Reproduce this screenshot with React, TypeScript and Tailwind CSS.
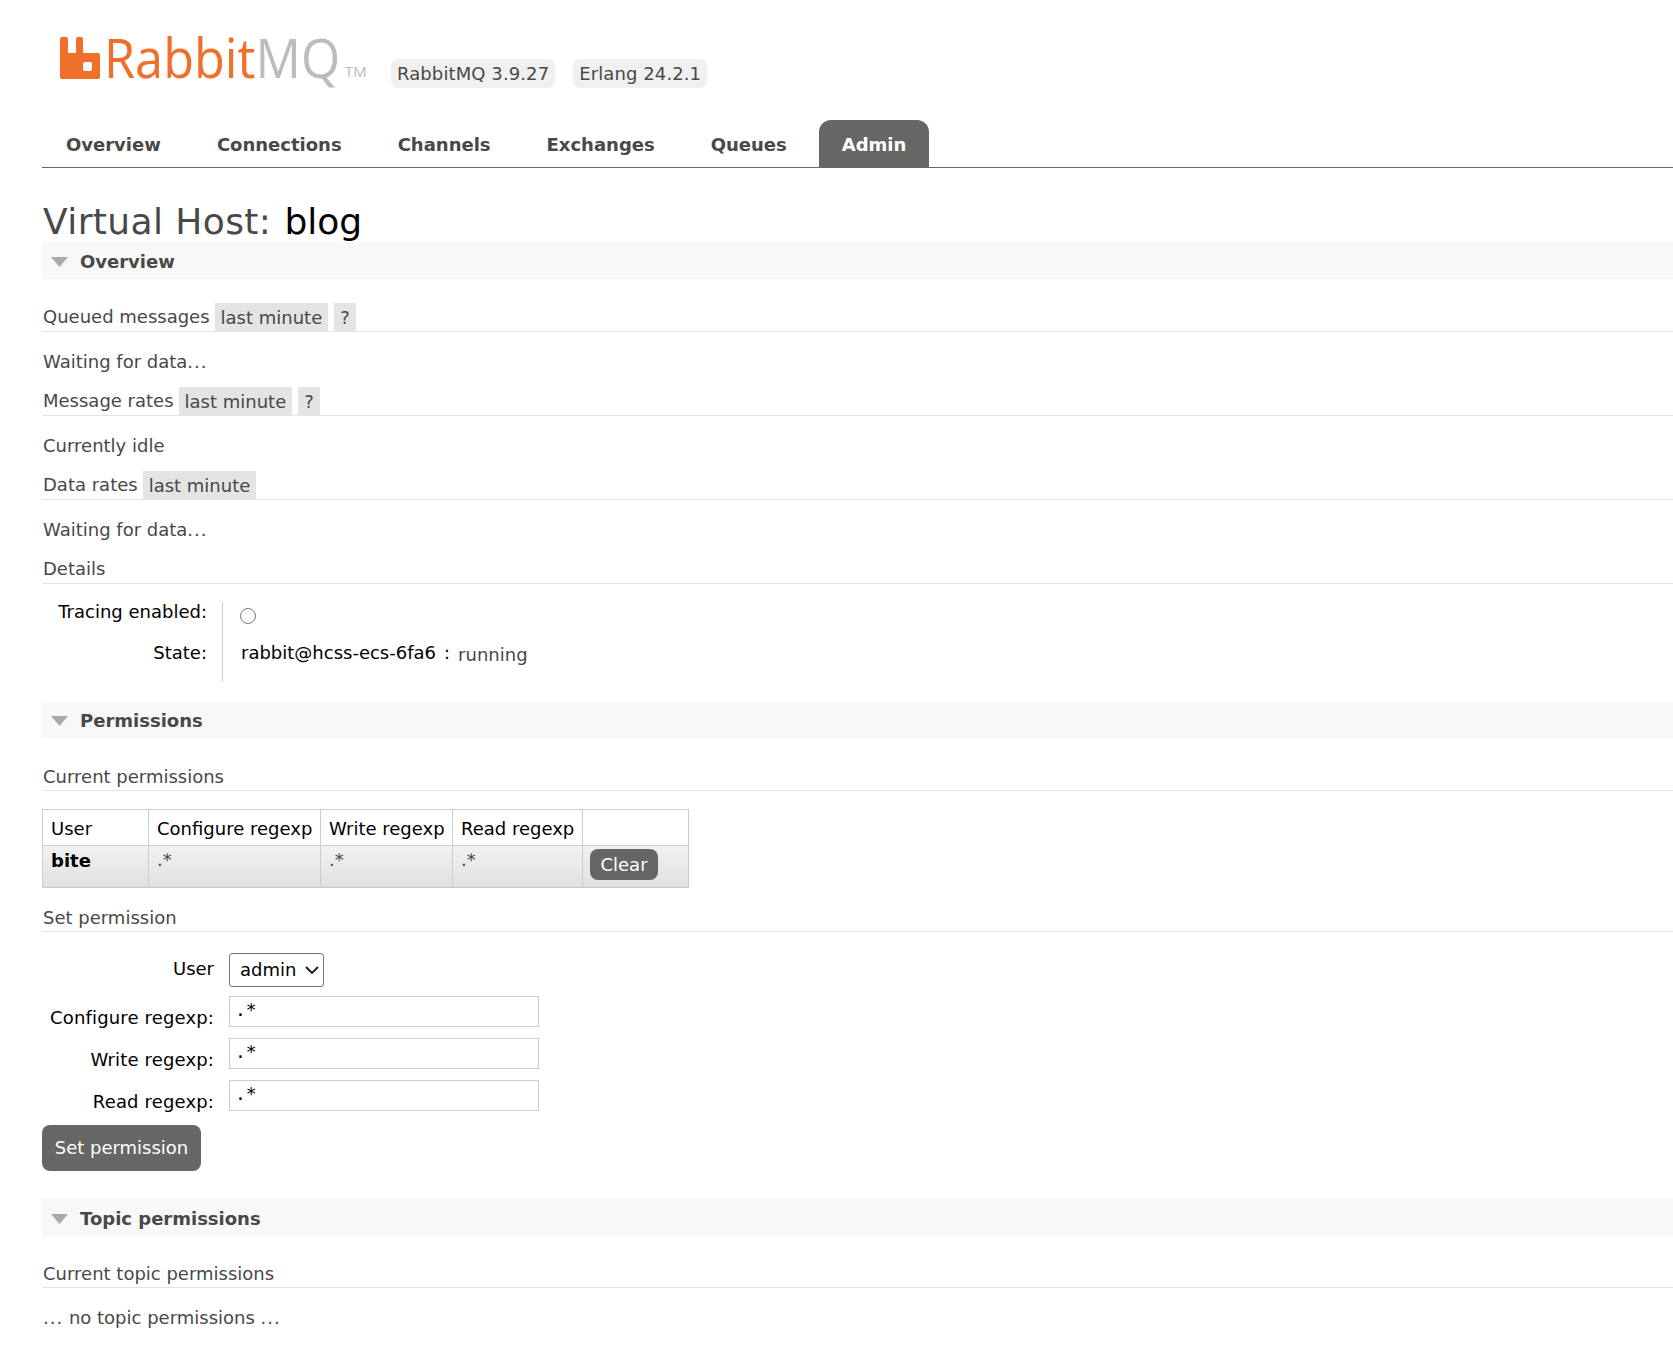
import type { ReactNode } from 'react';

function Logo() {
  return (
    <svg width="320" height="50" viewBox="0 0 320 50" className="block overflow-visible" aria-label="RabbitMQ">
      {/* rabbit mark */}
      <path
        fill="#f0702b"
        fillRule="evenodd"
        d="M2 0h4a2 2 0 0 1 2 2v14h8V2a2 2 0 0 1 2-2h3a2 2 0 0 1 2 2v14h15a2 2 0 0 1 2 2v22a2 2 0 0 1-2 2H2a2 2 0 0 1-2-2V2a2 2 0 0 1 2-2zM25 25a2 2 0 0 0-2 2v5a2 2 0 0 0 2 2h5a2 2 0 0 0 2-2v-5a2 2 0 0 0-2-2z"
      />
      <text
        transform="translate(44 41) scale(0.917 1)"
        fill="#f0702b"
        fontFamily="'Open Sans', sans-serif"
        fontSize="55"
      >
        Rabbit<tspan fill="#bcbcbc">MQ</tspan>
      </text>
      <text x="285" y="40" fill="#bcbcbc" fontFamily="'Open Sans', sans-serif" fontSize="15">
        TM
      </text>
    </svg>
  );
}

function Pill({ children }: { children: ReactNode }) {
  return <span className="h-[28px] bg-[#e4e4e4] px-[6px] pt-px leading-[28px]">{children}</span>;
}

function SectionBar({ title }: { title: string }) {
  return (
    <div className="flex h-[37px] items-center bg-[#f8f8f8] pt-[2px]">
      <svg width="17" height="10" viewBox="0 0 17 10" className="ml-[9px] mr-[12px]">
        <path d="M0 0h17L8.500 10z" fill="#aaaaaa" />
      </svg>
      <h2 className="font-bold text-[#484848]">{title}</h2>
    </div>
  );
}

function SubHead({ children, top = 0 }: { children: ReactNode; top?: number }) {
  return (
    <h3
      className="flex h-[29px] items-end gap-[6px] border-b border-[#e4e4e4] pl-px leading-[28px] text-[#484848]"
      style={top ? { marginTop: top } : undefined}
    >
      {children}
    </h3>
  );
}

function Status({ children }: { children: ReactNode }) {
  return <p className="flex h-[55px] items-center pl-px pt-[4px] text-[#484848]">{children}</p>;
}

function Chart({ title, help, top }: { title: string; help?: boolean; top?: number }) {
  return (
    <SubHead top={top}>
      <span className="-mr-px">{title}</span>
      <Pill>last minute</Pill>
      {help && <Pill>?</Pill>}
    </SubHead>
  );
}

function RegexpField({ label }: { label: string }) {
  return (
    <div className="mt-[11px] flex h-[31px] items-center">
      <label className="w-[172px] pt-[12px] text-right tracking-[0.15px] text-black">{label}</label>
      <input
        type="text"
        defaultValue=".*"
        className="ml-[15px] h-[31px] w-[310px] border border-[#cccccc] px-[5px] pb-[5px] font-['DejaVu_Sans_Mono',monospace] text-[18px] text-black outline-none"
      />
    </div>
  );
}

const NAV = ['Overview', 'Connections', 'Channels', 'Exchanges', 'Queues'];

const COLUMNS = [
  { label: 'User', cls: 'w-[106px]' },
  { label: 'Configure regexp', cls: 'w-[172px]' },
  { label: 'Write regexp', cls: 'w-[132px]' },
  { label: 'Read regexp', cls: 'w-[130px]' },
  { label: '', cls: 'w-[106px]' },
];

export default function App() {
  return (
    <div className="h-[1350px] overflow-hidden bg-white font-['DejaVu_Sans',sans-serif] text-[18px] leading-[24px] text-[#484848]">
      {/* header */}
      <header className="flex h-[120px] pl-[60px] pt-[37px]">
        <Logo />
        <div className="ml-[11px] mt-[22px] flex h-[29px] gap-[18px] tracking-[0.1px]">
          <span className="rounded-[7px] bg-[#f0f0f0] px-[6px] leading-[30px]">RabbitMQ 3.9.27</span>
          <span className="rounded-[7px] bg-[#f0f0f0] px-[6px] leading-[30px]">Erlang 24.2.1</span>
        </div>
      </header>

      <div className="pl-[42px]">
        <nav className="flex h-[48px] items-stretch gap-[8px] border-b border-[#666666] font-bold">
          {NAV.map((item) => (
            <a key={item} className="flex items-center px-[24px] pt-[3px] text-[#484848]">
              {item}
            </a>
          ))}
          <a className="flex items-center rounded-t-[12px] bg-[#666666] px-[23px] pt-[3px] text-white">Admin</a>
        </nav>

        <h1 className="flex h-[74px] items-end pl-px text-[36px] leading-[41px] text-[#484848]">
          <span className="tracking-[0.4px]">Virtual Host:</span>
          <b className="ml-[13px] font-normal text-black">blog</b>
        </h1>

        <SectionBar title="Overview" />
        <Chart title="Queued messages" help top={24} />
        <Status>
          Waiting for data<span className="tracking-[1px]">...</span>
        </Status>
        <Chart title="Message rates" help />
        <Status>Currently idle</Status>
        <Chart title="Data rates" />
        <Status>
          Waiting for data<span className="tracking-[1px]">...</span>
        </Status>
        <SubHead>Details</SubHead>

        <div className="mb-[19px] mt-[18px] flex h-[80px] text-black">
          <div className="w-[181px] border-r border-[#cccccc] pr-[15px] text-right">
            <div className="-mt-[2px] h-[41px]">Tracing enabled:</div>
            <div>State:</div>
          </div>
          <div className="pl-[18px]">
            <div className="h-[33px]">
              <input type="radio" readOnly className="-ml-px mt-[6px] block h-[16px] w-[16px]" />
            </div>
            <div className="flex">
              <span>rabbit@hcss-ecs-6fa6</span>
              <span className="ml-[8px]">:</span>
              <span className="relative top-[2px] ml-[8px] text-[#484848]">running</span>
            </div>
          </div>
        </div>

        <SectionBar title="Permissions" />
        <SubHead top={24}>
          <span className="relative top-px">Current permissions</span>
        </SubHead>

        <table className="mt-[18px] w-[646px] table-fixed border-collapse whitespace-nowrap border border-[#cccccc] text-black">
          <thead>
            <tr className="h-[36px]">
              {COLUMNS.map((c) => (
                <th key={c.label} className={`${c.cls} border border-[#cccccc] px-[8px] pt-[2px] text-left font-normal`}>
                  {c.label}
                </th>
              ))}
            </tr>
          </thead>
          <tbody>
            <tr className="h-[42px] bg-gradient-to-b from-[#f2f2f2] to-[#e0e0e0] align-top">
              <td className="border border-[#cccccc] px-[8px] pt-[3px] font-bold">bite</td>
              <td className="border border-[#cccccc] px-[8px] pt-[2px] text-[#484848]">.*</td>
              <td className="border border-[#cccccc] px-[8px] pt-[2px] text-[#484848]">.*</td>
              <td className="border border-[#cccccc] px-[8px] pt-[2px] text-[#484848]">.*</td>
              <td className="border border-[#cccccc] px-[7px] pt-[3px]">
                <button className="block h-[31px] w-[68px] rounded-[8px] bg-[#666666] text-white">Clear</button>
              </td>
            </tr>
          </tbody>
        </table>

        <SubHead top={15}>
          <span className="relative top-px">Set permission</span>
        </SubHead>

        <form className="mt-[21px]">
          <div className="-mb-[2px] flex h-[34px]">
            <label className="w-[172px] pt-[4px] text-right text-black">User</label>
            <div className="relative ml-[15px] h-[34px] w-[95px]">
              <select className="h-full w-full appearance-none rounded-[3px] border border-[#767676] bg-white pl-[10px] text-black">
                <option>admin</option>
              </select>
              <svg width="14" height="8" viewBox="0 0 14 8" className="pointer-events-none absolute right-[5px] top-[13px]">
                <path d="M1 1l6 6 6-6" fill="none" stroke="#222222" strokeWidth="2" />
              </svg>
            </div>
          </div>
          <RegexpField label="Configure regexp:" />
          <RegexpField label="Write regexp:" />
          <RegexpField label="Read regexp:" />
          <button type="button" className="mt-[14px] block h-[46px] w-[159px] rounded-[8px] bg-[#666666] text-white">
            Set permission
          </button>
        </form>

        <div className="mt-[28px]">
          <SectionBar title="Topic permissions" />
        </div>
        <SubHead top={23}>
          <span className="relative top-px">Current topic permissions</span>
        </SubHead>
        <Status>
          <span className="tracking-[1px]">...</span>&nbsp;no topic permissions&nbsp;<span className="tracking-[1px]">...</span>
        </Status>
      </div>
    </div>
  );
}
